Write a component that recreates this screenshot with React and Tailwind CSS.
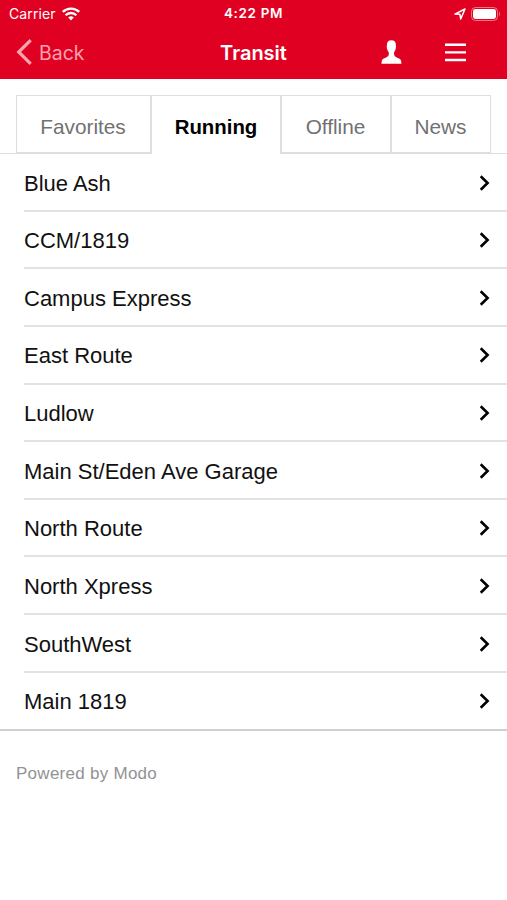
const ROUTES = [
  'Blue Ash',
  'CCM/1819',
  'Campus Express',
  'East Route',
  'Ludlow',
  'Main St/Eden Ave Garage',
  'North Route',
  'North Xpress',
  'SouthWest',
  'Main 1819',
]

const TABS = [
  { label: 'Favorites', box: 'w-[134px] border-l border-b-2 pt-[5px] pr-px text-[20.8px]' },
  { label: 'Running', box: 'w-[132px] border-x-2 pt-1 text-[20.4px]', active: true },
  { label: 'Offline', box: 'w-[108px] border-b-2 pt-[5px] pr-px text-[20.8px]' },
  { label: 'News', box: 'w-[101px] border-l-2 border-r border-b-2 pt-[5px] pr-px text-[20.8px]' },
]

// ── Status bar ───────────────────────────────────────────────

function WifiIcon() {
  return (
    <svg className="w-[18px] h-[14px] shrink-0" viewBox="0 0 18 14" fill="none" stroke="white" strokeWidth="2.3">
      <path d="M0.8 4.9a11.7 11.7 0 0 1 16.4 0" />
      <path d="M3.6 8.2a7.7 7.7 0 0 1 10.8 0" />
      <path d="M9 13.6l-2.8-3a4 4 0 0 1 5.6 0z" fill="white" stroke="none" />
    </svg>
  )
}

function StatusBar() {
  return (
    <div className="grid grid-cols-3 items-center h-[27px] px-[9px] text-[13px] leading-none">
      <div className="flex items-center gap-[6px]">
        <span className="text-[14px] tracking-[0.1px]">Carrier</span>
        <WifiIcon />
      </div>
      <span className="text-center text-[13.5px] font-semibold tracking-[0.65px] pt-px">4:22 PM</span>
      <div className="flex items-center justify-end gap-[5px] -mr-[3px]">
        <svg className="w-[12px] h-[12px]" viewBox="0 0 12 12" fill="none" stroke="white" strokeWidth="1.5" strokeLinejoin="round">
          <path d="M1 6.1L11 1L6.7 11L5.9 6.3z" />
        </svg>
        <svg className="w-[30px] h-[14px]" viewBox="0 0 30 14">
          <rect x="0.5" y="0.5" width="26" height="13" rx="4" fill="none" stroke="white" strokeOpacity="0.45" />
          <rect x="2" y="2" width="23" height="10" rx="2.4" fill="white" />
          <path d="M28 4.6q2 2.4 0 4.8z" fill="white" fillOpacity="0.5" />
        </svg>
      </div>
    </div>
  )
}

// ── Navigation bar ───────────────────────────────────────────

function NavBar() {
  return (
    <div className="grid grid-cols-3 items-center h-[50px] pl-4 pr-[41px]">
      <div className="flex items-center gap-[7px] text-[#f8a3ae]">
        <svg className="w-[16px] h-[26px]" viewBox="0 0 16 26" fill="none" stroke="currentColor" strokeWidth="3.2">
          <path d="M14.7 1.2L2.7 13L14.7 24.8" />
        </svg>
        <span className="text-[19.5px] leading-none pt-[3px]">Back</span>
      </div>
      <h1 className="text-center text-[20px] leading-none font-semibold pt-px pl-[25px]">Transit</h1>
      <div className="flex items-center justify-end gap-[43px]">
        <svg className="w-[21px] h-[24px]" viewBox="0 0 21 24" fill="white">
          <path d="M10.4 0.3C13.4 0.3 15 2.2 14.9 5.2C15.2 7.2 14.8 9.6 13.4 11.7C13 12.4 12.9 13.7 13.2 14.9C13.9 17.3 17.6 17.7 19.2 19.2C20.2 20.2 20.4 21.8 20.4 23.7H0.5C0.5 21.8 0.7 20.2 1.7 19.2C3.3 17.7 7 17.3 7.7 14.9C8 13.7 7.9 12.4 7.4 11.7C6 9.6 5.5 7.2 5.9 5.2C5.8 2.2 7.4 0.3 10.4 0.3z" />
        </svg>
        <svg className="w-[21px] h-[20px]" viewBox="0 0 21 20" stroke="white" strokeWidth="2.4">
          <path d="M0 2.8h21M0 10.4h21M0 18h21" />
        </svg>
      </div>
    </div>
  )
}

// ── Tabs ─────────────────────────────────────────────────────

function Tabs() {
  return (
    <div className="flex h-[59px] mt-4">
      <div className="w-4 border-b border-[#dcdcdc]" />
      {TABS.map(tab => (
        <div
          key={tab.label}
          className={`flex items-center justify-center border-t border-[#dedede] ${tab.box} ${
            tab.active ? 'font-bold text-black' : 'text-[#717171]'
          }`}
        >
          {tab.label}
        </div>
      ))}
      <div className="flex-1 border-b border-[#dcdcdc]" />
    </div>
  )
}

// ── Route list ───────────────────────────────────────────────

function RouteRow({ name }) {
  return (
    <li className="flex items-center justify-between h-[57.65px] last:h-[56.2px] ml-6 pr-[17px] pt-[2.4px] last:pt-px border-b-2 last:border-b-0 border-[#e2e2e2] text-[22px] text-[#111]">
      <span className="whitespace-nowrap">{name}</span>
      <svg className="w-[11px] h-[16px] mb-px" viewBox="0 0 11 16" fill="none" stroke="black" strokeWidth="2.6">
        <path d="M1.7 1.2L8.6 8L1.7 14.8" />
      </svg>
    </li>
  )
}

export default function App() {
  return (
    <div className="h-[900px] bg-white overflow-hidden font-['Liberation_Sans',Arial,sans-serif]">
      <header className="h-[79px] bg-[#e00122] text-white font-[Inter,sans-serif]">
        <StatusBar />
        <NavBar />
      </header>
      <Tabs />
      <ul className="border-b-2 border-[#d0d0d0]">
        {ROUTES.map(name => (
          <RouteRow key={name} name={name} />
        ))}
      </ul>
      <footer className="mt-[31px] ml-4 text-[17px] leading-6 tracking-[0.27px] text-[#929292]">Powered by Modo</footer>
    </div>
  )
}
